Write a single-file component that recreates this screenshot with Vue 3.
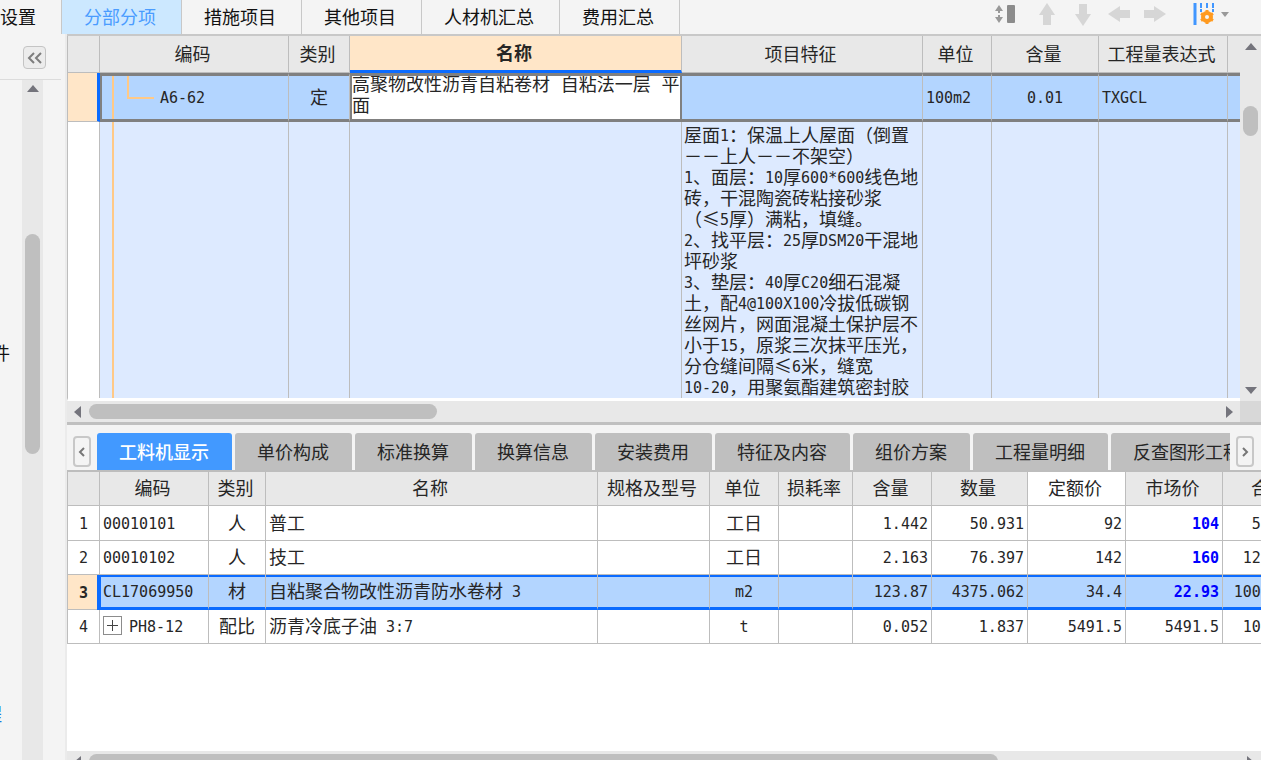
<script setup>
import { h, ref } from 'vue'

// Splits a string into CJK and Latin runs so that two Latin characters take one CJK cell.
const MixedText = (props) =>
  props.text
    .split(/([\x20-\x7e]+)/)
    .filter((s) => s)
    .map((s) => (/^[\x20-\x7e]+$/.test(s) ? h('span', { class: 'latin-run' }, s) : s))
MixedText.props = ['text']

const mainTabs = ['设置', '分部分项', '措施项目', '其他项目', '人材机汇总', '费用汇总']
const mainActive = ref(1)

const upperHeads = ['', '编码', '类别', '名称', '项目特征', '单位', '含量', '工程量表达式', '']
const itemName = ref('高聚物改性沥青自粘卷材 自粘法一层 平\n面')
const features = [
  '屋面1：保温上人屋面（倒置',
  '－－上人－－不架空）',
  '1、面层：10厚600*600线色地',
  '砖，干混陶瓷砖粘接砂浆',
  '（≤5厚）满粘，填缝。',
  '2、找平层：25厚DSM20干混地',
  '坪砂浆',
  '3、垫层：40厚C20细石混凝',
  '土，配4@100X100冷拔低碳钢',
  '丝网片，网面混凝土保护层不',
  '小于15，原浆三次抹平压光，',
  '分仓缝间隔≤6米，缝宽',
  '10-20，用聚氨酯建筑密封胶',
]

const detailTabs = ['工料机显示', '单价构成', '标准换算', '换算信息', '安装费用', '特征及内容', '组价方案', '工程量明细', '反查图形工程量']
const detailActive = ref(0)

const lowerHeads = ['', '编码', '类别', '名称', '规格及型号', '单位', '损耗率', '含量', '数量', '定额价', '市场价', '合价']
const rows = [
  { code: '00010101', kind: '人', name: '普工', unit: '工日', rate: '1.442', qty: '50.931', base: '92', market: '104', total: '5296.82', edited: true },
  { code: '00010102', kind: '人', name: '技工', unit: '工日', rate: '2.163', qty: '76.397', base: '142', market: '160', total: '12223.52', edited: true },
  { code: 'CL17069950', kind: '材', name: '自粘聚合物改性沥青防水卷材 3', unit: 'm2', rate: '123.87', qty: '4375.062', base: '34.4', market: '22.93', total: '100320.17', edited: true },
  { code: 'PH8-12', kind: '配比', name: '沥青冷底子油 3:7', unit: 't', rate: '0.052', qty: '1.837', base: '5491.5', market: '5491.5', total: '10087.89', group: true },
]
const selected = ref(2)
</script>

<template>
  <div class="app">
    <header class="topbar">
      <nav class="main-tabs">
        <button v-for="(t, i) in mainTabs" :key="t" :class="['main-tab', { active: i === mainActive }]" @click="mainActive = i">{{ t }}</button>
      </nav>
      <div class="tools">
        <button class="row-height" aria-label="行高">
          <svg width="22" height="22" viewBox="0 0 22 22"><path d="M5 2l4 6H1zM5 20l4-6H1z" fill="#999" /><path d="M5 7v8" stroke="#999" stroke-width="2" stroke-dasharray="3 2" /><rect x="13" y="2" width="8" height="18" rx="1" fill="#8c8c8c" /></svg>
        </button>
        <button aria-label="上移">
          <svg width="18" height="24" viewBox="0 0 18 24"><path d="M9 1l8 12h-4v10H5V13H1z" fill="#d6d6d6" /></svg>
        </button>
        <button aria-label="下移">
          <svg width="18" height="24" viewBox="0 0 18 24"><path d="M9 24L1 12h4V2h8v10h4z" fill="#d6d6d6" /></svg>
        </button>
        <button aria-label="左移">
          <svg width="24" height="18" viewBox="0 0 24 18"><path d="M1 9l12-8v4h10v8H13v4z" fill="#d6d6d6" /></svg>
        </button>
        <button aria-label="右移">
          <svg width="24" height="18" viewBox="0 0 24 18"><path d="M23 9L11 1v4H1v8h10v4z" fill="#d6d6d6" /></svg>
        </button>
        <button class="setting" aria-label="列设置">
          <svg width="22" height="24" viewBox="0 0 22 24">
            <path d="M2 1v22" stroke="#4096ff" stroke-width="3" />
            <path d="M8 1v9M14 1v5M20 1v9" stroke="#4096ff" stroke-width="2" stroke-dasharray="5 1" />
            <circle cx="14" cy="15" r="4" fill="none" stroke="#ff9a1f" stroke-width="4" />
            <path d="M14 8v14M8 11.500l12 7M8 18.500l12-7" stroke="#ff9a1f" stroke-width="3" />
            <circle cx="14" cy="15" r="2" fill="#f4f4f4" />
          </svg>
          <svg width="8" height="5" viewBox="0 0 8 5"><path d="M0 0h8L4 5z" fill="#999" /></svg>
        </button>
      </div>
    </header>

    <div class="body">
      <aside class="side">
        <div class="side-head">
          <button class="collapse" aria-label="收起">
            <svg width="15" height="12" viewBox="0 0 15 12"><path d="M7 1L2 6l5 5M14 1L9 6l5 5" fill="none" stroke="#7d7d7d" stroke-width="2" /></svg>
          </button>
        </div>
        <div class="side-body">
          <span class="node-a">件</span>
          <a class="node-b" href="#">程</a>
          <div class="side-scroll">
            <i class="arrow up"></i>
            <div class="side-thumb"></div>
          </div>
        </div>
      </aside>

      <main class="main">
        <section class="upper">
          <div class="upper-view">
            <div class="grid-wrap">
              <table class="grid upper-grid">
                <colgroup><col v-for="(c, i) in upperHeads" :key="i" :class="'u' + i" /></colgroup>
                <thead>
                  <tr><th v-for="(c, i) in upperHeads" :key="i" :class="{ current: i === 3 }">{{ c }}</th></tr>
                </thead>
                <tbody>
                  <tr class="item">
                    <td class="num mark"></td>
                    <td class="code"><i class="branch"></i><MixedText text="A6-62" /></td>
                    <td class="center">定</td>
                    <td class="edit"><textarea v-model="itemName" aria-label="名称" rows="2"></textarea></td>
                    <td></td>
                    <td><MixedText text="100m2" /></td>
                    <td class="center"><MixedText text="0.01" /></td>
                    <td><MixedText text="TXGCL" /></td>
                    <td></td>
                  </tr>
                  <tr class="feature">
                    <td class="num"></td>
                    <td class="trunk"></td>
                    <td></td>
                    <td></td>
                    <td class="feature-text"><p v-for="f in features" :key="f"><MixedText :text="f" /></p></td>
                    <td></td>
                    <td></td>
                    <td></td>
                    <td></td>
                  </tr>
                </tbody>
              </table>
            </div>
            <div class="vscroll">
              <i class="arrow up"></i>
              <div class="vthumb"></div>
              <i class="arrow down"></i>
            </div>
          </div>
          <div class="hscroll-row">
            <div class="hscroll">
              <i class="arrow left"></i>
              <div class="hthumb"></div>
              <i class="arrow right"></i>
            </div>
            <div class="corner"></div>
          </div>
        </section>

        <section class="lower">
          <div class="detail-bar">
            <button class="pager" aria-label="向左">
              <svg width="8" height="10" viewBox="0 0 8 10"><path d="M6 1L2 5l4 4" fill="none" stroke="#777" stroke-width="2" /></svg>
            </button>
            <div class="detail-tabs">
              <button v-for="(t, i) in detailTabs" :key="t" :class="['detail-tab', { active: i === detailActive }]" @click="detailActive = i">{{ t }}</button>
            </div>
            <button class="pager" aria-label="向右">
              <svg width="8" height="10" viewBox="0 0 8 10"><path d="M2 1l4 4-4 4" fill="none" stroke="#777" stroke-width="2" /></svg>
            </button>
          </div>
          <div class="lower-view">
            <table class="grid lower-grid">
              <colgroup><col v-for="(c, i) in lowerHeads" :key="i" :class="'l' + i" /></colgroup>
              <thead>
                <tr><th v-for="(c, i) in lowerHeads" :key="i" :class="{ white: i === 9 }">{{ c }}</th></tr>
              </thead>
              <tbody>
                <tr v-for="(r, i) in rows" :key="r.code" :class="{ selected: i === selected }" @click="selected = i">
                  <td class="num"><MixedText :text="String(i + 1)" /></td>
                  <td class="first">
                    <div class="code-cell">
                      <button v-if="r.group" class="expand" aria-label="展开"></button>
                      <span><MixedText :text="r.code" /></span>
                    </div>
                  </td>
                  <td class="center">{{ r.kind }}</td>
                  <td><MixedText :text="r.name" /></td>
                  <td></td>
                  <td class="center"><MixedText :text="r.unit" /></td>
                  <td></td>
                  <td class="right"><MixedText :text="r.rate" /></td>
                  <td class="right"><MixedText :text="r.qty" /></td>
                  <td class="right"><MixedText :text="r.base" /></td>
                  <td :class="['right', { edited: r.edited }]"><MixedText :text="r.market" /></td>
                  <td class="right"><MixedText :text="r.total" /></td>
                </tr>
              </tbody>
            </table>
          </div>
          <div class="bottom-scroll">
            <div class="hscroll">
              <i class="arrow left"></i>
              <div class="hthumb wide"></div>
              <i class="arrow right"></i>
            </div>
          </div>
        </section>
      </main>
    </div>
  </div>
</template>

<style>
body {
  margin: 0;
  overflow: hidden;
}
.latin-run {
  font-family: 'DejaVu Sans Mono', monospace;
  font-size: 15px;
  line-height: 0;
  vertical-align: 1px;
  white-space: pre;
}
</style>

<style scoped>
.app {
  display: flex;
  flex-direction: column;
  height: 100vh;
  overflow: hidden;
  background: #f4f4f4;
  color: #262626;
  font: 18px/21px 'Noto Sans CJK SC', sans-serif;
}
.app * {
  box-sizing: border-box;
}
button {
  margin: 0;
  padding: 0;
  border: 0;
  background: none;
  color: inherit;
  font: inherit;
  white-space: nowrap;
}
svg {
  display: block;
}
.topbar {
  display: flex;
  flex: none;
  justify-content: space-between;
  height: 34px;
}
.main-tabs {
  display: flex;
}
.main-tab {
  padding: 0 25px 2px 22px;
  border-right: 1px solid #c8c8c8;
  color: #111;
}
.main-tab:first-child {
  padding-left: 0;
}
.main-tab.active {
  background: #cce8ff;
  color: #4a9cff;
}
.tools {
  display: flex;
  align-items: center;
  gap: 12px;
  padding: 0 32px 6px 0;
}
.tools button {
  display: flex;
  align-items: center;
  justify-content: center;
  min-width: 24px;
}
.tools .row-height {
  margin-right: 6px;
}
.tools .setting {
  gap: 6px;
  margin-left: 14px;
}
.body {
  display: flex;
  flex: 1;
  min-height: 0;
}
.side {
  display: flex;
  flex: none;
  flex-direction: column;
  width: 67px;
  border-right: 2px solid #ebebeb;
}
.side-head {
  display: flex;
  justify-content: flex-end;
  height: 46px;
  margin-right: 4px;
  padding: 12px 15px 0 0;
  border-bottom: 1px solid #dcdcdc;
}
.collapse {
  display: flex;
  align-items: center;
  justify-content: center;
  width: 23px;
  height: 23px;
  border: 1px solid #c4c4c4;
  border-radius: 4px;
  background: #ececec;
}
.side-body {
  position: relative;
  flex: 1;
  overflow: hidden;
}
.side-scroll {
  display: flex;
  flex-direction: column;
  align-items: center;
  width: 21px;
  height: 100%;
  margin-left: 22px;
  padding-top: 5px;
  background: #e8e8e8;
}
.side-thumb {
  width: 15px;
  height: 220px;
  margin-top: 142px;
  border-radius: 8px;
  background: #bfbfbf;
}
.node-a,
.node-b {
  position: absolute;
  left: -8px;
  top: 262px;
  color: #111;
}
.node-b {
  left: -16px;
  top: 623px;
  color: #1677e0;
  text-decoration: none;
}
.arrow {
  flex: none;
  width: 0;
  height: 0;
  border: 6px solid transparent;
}
.arrow.up {
  border-top: 0;
  border-bottom: 7px solid #74747c;
}
.arrow.down {
  border-bottom: 0;
  border-top: 7px solid #74747c;
}
.arrow.left {
  border-left: 0;
  border-right: 7px solid #74747c;
}
.arrow.right {
  border-right: 0;
  border-left: 7px solid #74747c;
}
.main {
  display: flex;
  flex: 1;
  flex-direction: column;
  min-width: 0;
}
.upper {
  display: flex;
  flex: 386 1 0;
  flex-direction: column;
  min-height: 0;
  border-top: 2px solid #c8c8c8;
  border-bottom: 3px solid #c0c0c0;
}
.upper-view {
  display: flex;
  flex: 1;
  min-height: 0;
}
.grid-wrap {
  flex: 1;
  min-width: 0;
  border-bottom: 3px solid #fff;
  border-left: 1px solid #bdbdbd;
  overflow: hidden;
}
.grid {
  width: 0;
  border-collapse: separate;
  border-spacing: 0;
  table-layout: fixed;
}
.grid th,
.grid td {
  padding: 0 3px 2px;
  border-right: 1px solid #bdbdbd;
  border-bottom: 1px solid #bdbdbd;
  white-space: nowrap;
}
.grid th {
  padding: 0 5px 2px 2px;
  background: #e8e8e8;
  font-weight: 400;
  text-align: center;
}
.grid .center {
  text-align: center;
}
.grid .right {
  text-align: right;
}
.u0 { width: 32px; }
.u1 { width: 189px; }
.u2 { width: 61px; }
.u3 { width: 332px; }
.u4 { width: 241px; }
.u5 { width: 69px; }
.u6 { width: 107px; }
.u7 { width: 129px; }
.u8 { width: 96px; }
.upper-grid th {
  height: 37px;
}
.upper-grid th.current {
  border-bottom: 3px solid #0b6bff;
  background: #ffe6c8;
  font-weight: 700;
}
.item td {
  height: 49px;
  border-top: 3px solid #808080;
  border-bottom: 3px solid #808080;
  background: #b3d5ff;
}
.item td.num {
  border-top: 0;
  border-bottom: 1px solid #bdbdbd;
  border-right: 3px solid #0b6bff;
  background: #ffe6c8;
}
.item td.code {
  position: relative;
  padding-left: 58px;
  border-left: 2px solid #808080;
}
.branch {
  position: absolute;
  top: 0;
  bottom: 0;
  left: 10px;
  width: 2px;
  background: #ffc987;
}
.branch::after {
  content: '';
  position: absolute;
  left: 15px;
  width: 25px;
  height: 21px;
  border: solid #ffc987;
  border-width: 0 0 2px 2px;
}
.item td.edit {
  padding: 0;
  border-right: 2px solid #808080;
  border-left: 2px solid #808080;
  background: #fff;
}
.edit textarea {
  display: block;
  width: 100%;
  height: 43px;
  padding: 0;
  border: 0;
  outline: 0;
  resize: none;
  overflow: hidden;
  background: #fff;
  color: inherit;
  font: 18px/21px 'Liberation Mono', 'Noto Sans CJK SC', monospace;
  white-space: pre;
}
.feature td {
  background: #ddeaff;
  vertical-align: top;
}
.feature td.num {
  background: #fff;
}
.feature td.trunk {
  position: relative;
}
.trunk::before {
  content: '';
  position: absolute;
  top: 0;
  bottom: 0;
  left: 12px;
  width: 2px;
  background: #ffc987;
}
.feature td.feature-text {
  padding: 2px 0 21px 2px;
}
.feature-text p {
  margin: 0;
}
.vscroll {
  display: flex;
  flex: none;
  flex-direction: column;
  align-items: center;
  width: 21px;
  padding: 7px 0;
  background: #e8e8e8;
}
.vthumb {
  width: 15px;
  height: 30px;
  margin: 56px 0 auto;
  border-radius: 8px;
  background: #bfbfbf;
}
.hscroll-row {
  display: flex;
  flex: none;
}
.hscroll {
  display: flex;
  flex: 1;
  align-items: center;
  height: 21px;
  padding: 0 7px;
  background: #e8e8e8;
}
.hthumb {
  width: 30%;
  height: 15px;
  margin: 0 auto 0 8px;
  border-radius: 8px;
  background: #bfbfbf;
}
.hthumb.wide {
  width: 77%;
}
.corner {
  width: 21px;
  background: #d8d8d8;
}
.lower {
  display: flex;
  flex: 335 1 0;
  flex-direction: column;
  min-height: 0;
}
.detail-bar {
  display: flex;
  flex: none;
  gap: 6px;
  height: 47px;
  padding: 8px 7px 0 6px;
  border-bottom: 2px solid #bdbdbd;
}
.pager {
  display: flex;
  flex: none;
  align-items: center;
  justify-content: center;
  width: 18px;
  height: 31px;
  margin-top: 3px;
  border: 2px solid #c8c8c8;
  border-radius: 4px;
}
.detail-tabs {
  display: flex;
  flex: 1;
  gap: 3px;
  min-width: 0;
  overflow: hidden;
}
.detail-tab {
  flex: none;
  padding: 0 23px 0 22px;
  border-radius: 3px 3px 0 0;
  background: #bfbfbf;
}
.detail-tab.active {
  background: #4299ff;
  color: #fff;
  font-weight: 500;
}
.lower-view {
  flex: 1;
  min-height: 0;
  overflow: hidden;
  background: #fff;
}
.l0 { width: 33px; }
.l1 { width: 109px; }
.l2 { width: 57px; }
.l3 { width: 332px; }
.l4 { width: 112px; }
.l5 { width: 69px; }
.l6 { width: 74px; }
.l7 { width: 79px; }
.l8 { width: 96px; }
.l9 { width: 98px; }
.l10 { width: 97px; }
.l11 { width: 96px; }
.lower-grid th {
  height: 34px;
}
.lower-grid th.white {
  background: #fff;
}
.lower-grid td {
  height: 34px;
}
.lower-grid tr:nth-child(odd) td {
  height: 35px;
}
.lower-grid .num {
  border-left: 1px solid #bdbdbd;
  text-align: center;
}
.lower-grid th:first-child {
  border-left: 1px solid #bdbdbd;
}
.edited {
  color: #0000ff;
  font-weight: 700;
}
.selected td {
  background: #b3d5ff;
  box-shadow: inset 0 2px #0b6bff;
  border-bottom: 3px solid #0b6bff;
}
.selected td.num {
  border-bottom: 1px solid #bdbdbd;
  background: #ffe6c8;
  box-shadow: none;
  font-weight: 700;
}
.selected .first {
  position: relative;
}
.selected .first::before {
  content: '';
  position: absolute;
  top: 0;
  bottom: -3px;
  left: -3px;
  width: 4px;
  background: #0b6bff;
}
.code-cell {
  display: flex;
  align-items: center;
  gap: 7px;
}
.expand {
  width: 19px;
  height: 19px;
  border: 1px solid #8c8c8c;
  background:
    linear-gradient(#444, #444) center / 11px 1px no-repeat,
    linear-gradient(#444, #444) center / 1px 11px no-repeat;
}
.bottom-scroll {
  flex: none;
  height: 9px;
  overflow: hidden;
}
</style>
